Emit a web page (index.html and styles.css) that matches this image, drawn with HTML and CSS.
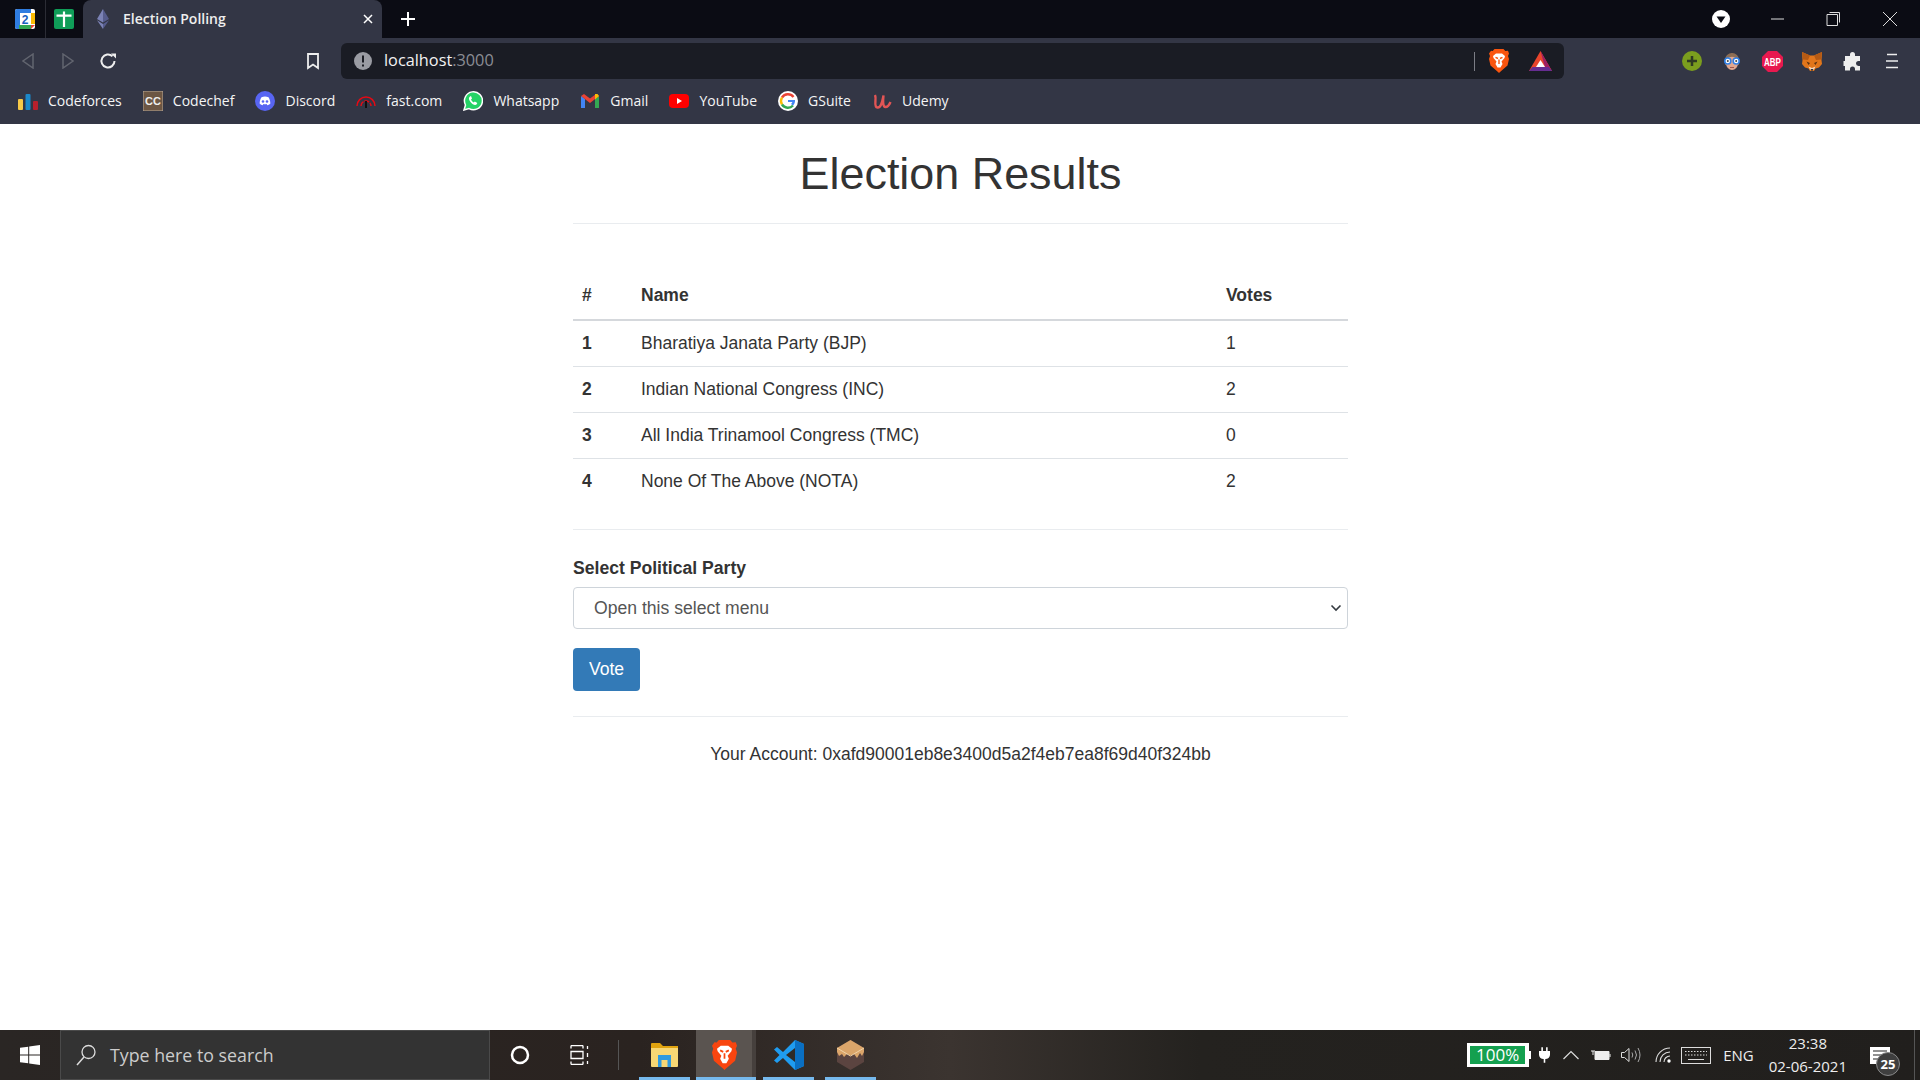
FILE: index.html
```html
<!DOCTYPE html>
<html lang="en">
<head>
    <meta charset="UTF-8">
    <title>Election Polling</title>
    <link rel="stylesheet" href="styles.css">
</head>
<body>
    <!-- tab strip -->
    <div class="tabstrip">
        <span class="pinned">
            <svg width="20" height="20" viewBox="0 0 20 20"><rect width="20" height="20" rx="2" fill="#fff"/><path d="M0 2a2 2 0 0 1 2-2h3v20H2a2 2 0 0 1-2-2z" fill="#2f7de1"/><path d="M2 0h14v4H2z" fill="#2f7de1"/><path d="M16 4h4v11h-4z" fill="#fbbc04"/><path d="M4 16h12v4H4z" fill="#34a853"/><path d="M16 16h4l-4 4z" fill="#ea4335"/><text x="10" y="14.500" class="cal-num">2</text></svg>
        </span>
        <span class="pin-sep"></span>
        <span class="pinned">
            <svg width="20" height="20" viewBox="0 0 20 20"><rect width="20" height="20" rx="2" fill="#0f9d58"/><path d="M2.500 5.500h15v2.200h-6.400V18H8.900V7.700H2.500zM8.900 2.500h2.200v3H8.900z" fill="#fff"/></svg>
        </span>
        <div class="tab">
            <svg class="tab-fav" width="12" height="20" viewBox="0 0 12 20"><path d="M6 0 0 10l6 3.500z" fill="#7b82b5"/><path d="M6 0l6 10-6 3.500z" fill="#565c8c"/><path d="M0 11.300 6 20v-5z" fill="#7b82b5"/><path d="M12 11.300 6 20v-5z" fill="#565c8c"/></svg>
            <span class="tab-title">Election Polling</span>
            <svg class="tab-close" width="10" height="10" viewBox="0 0 10 10"><path d="M1 1l8 8M9 1 1 9" stroke="#fff" stroke-width="1.500"/></svg>
        </div>
        <svg class="new-tab" width="14" height="14" viewBox="0 0 14 14"><path d="M7 0v14M0 7h14" stroke="#fff" stroke-width="2"/></svg>
        <div class="win-controls">
            <svg class="win-drop" width="18" height="18" viewBox="0 0 18 18"><circle cx="9" cy="9" r="9" fill="#fff"/><path d="M4.500 6.500h9L9 13z" fill="#0b0c14"/></svg>
            <svg class="win-btn" width="46" height="14" viewBox="0 0 46 14"><path d="M17 7h13" stroke="#ddd"/></svg>
            <svg class="win-btn" width="46" height="14" viewBox="0 0 46 14"><path d="M19.500.5h10.000v10M17 2.500h10.500v11H17z" fill="none" stroke="#ddd"/></svg>
            <svg class="win-btn" width="46" height="14" viewBox="0 0 46 14"><path d="M17 0l14 14M31 0 17 14" stroke="#ddd"/></svg>
        </div>
    </div>

    <!-- toolbar -->
    <div class="toolbar">
        <span class="tool-btn"><svg width="12" height="16" viewBox="0 0 12 16"><path d="M11 1 1 8l10 7z" fill="none" stroke="#62656f" stroke-width="1.500"/></svg></span>
        <span class="tool-btn"><svg width="12" height="16" viewBox="0 0 12 16"><path d="M1 1l10 7-10 7z" fill="none" stroke="#62656f" stroke-width="1.500"/></svg></span>
        <span class="tool-btn"><svg width="18" height="18" viewBox="0 0 18 18"><path d="M15.500 9a6.500 6.500 0 1 1-2-4.700" fill="none" stroke="#eee" stroke-width="2"/><path d="M12 1.500h5v5z" fill="#eee"/></svg></span>
        <span class="tool-btn bookmark-btn"><svg width="14" height="17" viewBox="0 0 14 17"><path d="M2 1h10v14l-5-3.500L2 15z" fill="none" stroke="#eee" stroke-width="1.800"/></svg></span>
        <div class="address">
            <svg class="addr-alert" width="18" height="18" viewBox="0 0 18 18"><circle cx="9" cy="9" r="9" fill="#9a9ca3"/><path d="M8 3.500h2V10.500H8zM8 12.500h2v2H8z" fill="#1b1d24"/></svg>
            <span class="addr-text">localhost<span class="addr-port">:3000</span></span>
            <span class="addr-sep"></span>
            <svg class="addr-brave" width="20" height="24" viewBox="0 0 20 24"><path d="M5.500 0h9l1.800 2 2.700-.3L20 4.500 19 7l1 3-1.500 6.500L11 23l-1 1-1-1-7.500-6.500L0 10l1-3-1-2.500 2-2.800L3.700 2z" fill="#f9550f"/><path d="M4 7l3-2.500h6L16 7l-.5 2-3 3.500 1 2.500-2 3.500H8.500l-2-3.500 1-2.500-3-3.500z" fill="#fff"/><path d="M6.500 8.300l2.500 1.200M13.500 8.300 11 9.500M10 10.500V15" stroke="#f9550f" stroke-width="1.400"/></svg>
            <svg class="addr-bat" width="23" height="20" viewBox="0 0 23 20"><path d="M11.500 0 0 20h23z" fill="#e8452c"/><path d="M11.500 0 23 20H17z" fill="#9e1f63"/><path d="M0 20l3.500-4h16l3.500 4z" fill="#662d91"/><path d="M11.500 9 7 16h9z" fill="#fff"/></svg>
        </div>
        <div class="extensions">
            <span class="tool-btn"><svg width="20" height="20" viewBox="0 0 20 20"><circle cx="10" cy="10" r="10" fill="#7b9e1e"/><path d="M10 5v10M5 10h10" stroke="#2e3a22" stroke-width="2.500"/></svg></span>
            <span class="tool-btn"><svg width="18" height="20" viewBox="0 0 18 20"><path d="M2 9a7 7 0 0 1 14 0v5H2z" fill="#8d6e55"/><ellipse cx="9" cy="12" rx="6" ry="7" fill="#e0a890"/><path d="M3.500 8c3-3 8-3 11 0V5l-5.500-3-5.500 3z" fill="#8d6e55"/><circle cx="4.800" cy="10" r="3" fill="#fff" stroke="#2f80e8" stroke-width="1.600"/><circle cx="13.200" cy="10" r="3" fill="#fff" stroke="#2f80e8" stroke-width="1.600"/><circle cx="4.800" cy="10" r="1" fill="#444"/><circle cx="13.200" cy="10" r="1" fill="#444"/><path d="M7 16.500h4" stroke="#a0584c"/></svg></span>
            <span class="tool-btn"><svg width="21" height="21" viewBox="0 0 21 21"><path d="M6 0h9l6 6v9l-6 6H6l-6-6V6z" fill="#e8194f"/><text x="10.500" y="11" transform="scale(1 1.350)" class="abp-text">ABP</text></svg></span>
            <span class="tool-btn"><svg width="20" height="19" viewBox="0 0 20 19"><path d="M0 0l8 3.500h4L20 0l-.5 8 .5 4-3 3.500-3.500 1L12 19H8l-1.500-2.500L3 15.500 0 12l.5-4z" fill="#e2761b"/><path d="M0 0l8 3.500L6 8 1 7.500zM20 0l-8 3.500L14 8l5-.5z" fill="#b55a14"/><path d="M4.500 9.500 8 11l-1.500 2zM15.500 9.500 12 11l1.500 2z" fill="#5c3212"/><path d="M6.500 14.500 10 16l3.500-1.500-1.500 3H8z" fill="#f3d6bc"/><path d="M9 17h2v1.500H9z" fill="#233447"/></svg></span>
            <span class="tool-btn"><svg width="19" height="19" viewBox="0 0 19 19"><path d="M7 2.500a2.500 2.500 0 0 1 5 0V4h5v5h-1.500a2.500 2.500 0 0 0 0 5H17v4.500H12V17a2.500 2.500 0 0 0-5 0v1.500H2V14H.5V9H2V4h5z" fill="#eee"/></svg></span>
            <span class="tool-btn"><svg width="14" height="16" viewBox="0 0 14 16"><path d="M2 1.500h10M1 8h12M1 14.500h12" stroke="#eee" stroke-width="1.500"/></svg></span>
        </div>
    </div>

    <!-- bookmarks -->
    <div class="bookmarks">
        <a class="bm"><svg width="20" height="20" viewBox="0 0 20 20"><rect x="0" y="8" width="5" height="11" rx="1" fill="#f7c948"/><rect x="7.500" y="3" width="5" height="16" rx="1" fill="#1b88c9"/><rect x="15" y="10" width="5" height="9" rx="1" fill="#b8202c"/></svg>Codeforces</a>
        <a class="bm"><svg width="20" height="20" viewBox="0 0 20 20"><rect width="20" height="20" fill="#6c5643" stroke="#b7a796"/><text x="10" y="14" class="cc-text">CC</text></svg>Codechef</a>
        <a class="bm"><svg width="20" height="20" viewBox="0 0 20 20"><circle cx="10" cy="10" r="10" fill="#5865f2"/><path d="M6.500 6.300c2.300-1 4.700-1 7 0 1.300 2 1.900 4.200 1.800 6.500-1 .8-2 1.200-3 1.400l-.7-1.100c-1.100.3-2.100.3-3.200 0l-.7 1.100c-1-.2-2-.6-3-1.400-.1-2.300.5-4.500 1.800-6.500z" fill="#fff"/><circle cx="8" cy="10.500" r="1.300" fill="#5865f2"/><circle cx="12" cy="10.500" r="1.300" fill="#5865f2"/></svg>Discord</a>
        <a class="bm"><svg width="20" height="20" viewBox="0 0 20 20"><path d="M1 15a9 9 0 0 1 18 0" fill="none" stroke="#e50914" stroke-width="1.500"/><path d="M5 15a5 5 0 0 1 10 0" fill="none" stroke="#e50914" stroke-width="1.500" stroke-dasharray="5 1"/><path d="M9 10h2v7H9z" fill="#111"/></svg>fast.com</a>
        <a class="bm"><svg width="20" height="20" viewBox="0 0 20 20"><path d="M1 19l1.500-5A9 9 0 1 1 6 17.600z" fill="#25d366" stroke="#fff" stroke-width="1.500"/><path d="M7 5.500c-1.500 1-1.500 3 .5 5.500s4.500 3.500 6 2.500l.8-1.500-2.500-1.500-1 1c-1-.3-2.500-2-2.800-3l1-1-1-2.500z" fill="#fff"/></svg>Whatsapp</a>
        <a class="bm"><svg width="20" height="20" viewBox="0 0 20 20"><path d="M1 5v12h4V8z" fill="#4285f4"/><path d="M15 8v9h4V5z" fill="#34a853"/><path d="M1 5l9 7 9-7-3-2-6 4.500L4 3z" fill="#ea4335"/><path d="M15 3h2.500L19 5l-4 3.500z" fill="#fbbc04"/></svg>Gmail</a>
        <a class="bm"><svg width="20" height="20" viewBox="0 0 20 20"><rect y="3" width="20" height="14" rx="4" fill="#f00"/><path d="M8 7l5 3-5 3z" fill="#fff"/></svg>YouTube</a>
        <a class="bm"><svg width="20" height="20" viewBox="0 0 20 20"><circle cx="10" cy="10" r="10" fill="#fff"/><path d="M15.500 6A7 7 0 0 0 4 6.500" fill="none" stroke="#ea4335" stroke-width="2.400"/><path d="M4 6.500a7 7 0 0 0 0 7" fill="none" stroke="#fbbc04" stroke-width="2.400"/><path d="M4 13.500a7 7 0 0 0 11 1" fill="none" stroke="#34a853" stroke-width="2.400"/><path d="M10 9h7c.2 2.500-.7 4.400-2 5.500l-2-1.500c.7-.5 1.200-1.200 1.400-2H10z" fill="#4285f4"/></svg>GSuite</a>
        <a class="bm"><svg width="20" height="20" viewBox="0 0 20 20"><path d="M3 4c2 4-2 12 2.500 12.500C9.500 17 10.500 9 11.500 4.500c-.5 5-1 11.500 2 11.500 2.500 0 4-2.500 5-5" fill="none" stroke="#e25555" stroke-width="2.400"/></svg>Udemy</a>
    </div>

    <!-- page -->
    <div class="page">
        <div class="container">
            <h1 class="title">Election Results</h1>
            <hr class="rule rule-top">
            <table class="results">
                <thead>
                    <tr><th class="col-num">#</th><th class="col-name">Name</th><th class="col-votes">Votes</th></tr>
                </thead>
                <tbody>
                    <tr><th>1</th><td>Bharatiya Janata Party (BJP)</td><td>1</td></tr>
                    <tr><th>2</th><td>Indian National Congress (INC)</td><td>2</td></tr>
                    <tr><th>3</th><td>All India Trinamool Congress (TMC)</td><td>0</td></tr>
                    <tr><th>4</th><td>None Of The Above (NOTA)</td><td>2</td></tr>
                </tbody>
            </table>
            <hr class="rule rule-mid">
            <label class="vote-label">Select Political Party</label>
            <div class="select">
                <span>Open this select menu</span>
                <svg width="12" height="8" viewBox="0 0 12 8"><path d="M1.500 1.500 6 6l4.500-4.500" fill="none" stroke="#343a40" stroke-width="1.600"/></svg>
            </div>
            <button class="vote-btn">Vote</button>
            <hr class="rule rule-bottom">
            <p class="account">Your Account: 0xafd90001eb8e3400d5a2f4eb7ea8f69d40f324bb</p>
        </div>
    </div>

    <!-- windows taskbar -->
    <div class="taskbar">
        <span class="start"><svg width="20" height="20" viewBox="0 0 20 20"><path d="M0 2.800 8.200 1.700v7.800H0zM9.200 1.500 20 0v9.500H9.200zM0 10.500h8.200v7.800L0 17.200zM9.200 10.500H20V20L9.200 18.500z" fill="#fff"/></svg></span>
        <div class="search">
            <svg width="20" height="22" viewBox="0 0 20 22"><circle cx="12.500" cy="8" r="6.500" fill="none" stroke="#ddd" stroke-width="1.300"/><path d="M8 13 1 21" stroke="#ddd" stroke-width="1.500"/></svg>
            <span>Type here to search</span>
        </div>
        <span class="task-tool"><svg width="20" height="20" viewBox="0 0 20 20"><circle cx="10" cy="10" r="8" fill="none" stroke="#fff" stroke-width="2.500"/></svg></span>
        <span class="task-tool"><svg width="20" height="20" viewBox="0 0 20 20"><path d="M1 .5h12M1 19.500h12M1 6.500h12v7H1zM1 .5v3M13 .5v3M1 16.500v3M13 16.500v3M17.500 1v3M17.500 8v4M17.500 16v3" fill="none" stroke="#fff" stroke-width="1.300"/></svg></span>
        <span class="task-sep"></span>
        <span class="task-app task-folder running"><svg width="27" height="24" viewBox="0 0 27 24"><path d="M0 1a1 1 0 0 1 1-1h8l3 3h15v4H0z" fill="#e0a30f"/><path d="M0 5h27v18a1 1 0 0 1-1 1H1a1 1 0 0 1-1-1z" fill="#f7d774"/><path d="M7 12h13v12h-3.500v-7h-6v7H7z" fill="#2e9ae0"/></svg></span>
        <span class="task-app running active"><svg width="25" height="30" viewBox="0 0 20 24"><path d="M5.500 0h9l1.800 2 2.700-.3L20 4.500 19 7l1 3-1.500 6.500L11 23l-1 1-1-1-7.500-6.500L0 10l1-3-1-2.500 2-2.800L3.700 2z" fill="#f9450f"/><path d="M4 7l3-2.500h6L16 7l-.5 2-3 3.500 1 2.500-2 3.500H8.500l-2-3.500 1-2.500-3-3.500z" fill="#fff"/><path d="M6.500 8.300l2.500 1.200M13.500 8.300 11 9.500M10 10.500V15" stroke="#f9450f" stroke-width="1.400"/></svg></span>
        <span class="task-app running"><svg width="30" height="30" viewBox="0 0 30 30"><path d="M21 0 30 4v22l-9 4L9 18l-6 5-3-2.500L5.500 15 0 9.500 3 7l6 5z" fill="#1f9cf0"/><path d="M21 8 12 15l9 7z" fill="#2f2a26"/><path d="M21 0v30l9-4V4z" fill="#0a6fc2"/></svg></span>
        <span class="task-app running"><svg width="27" height="30" viewBox="0 0 27 30"><path d="M13.500 0 27 8v14l-13.500 8L0 22V8z" fill="#5b4440"/><path d="M13.500 0 27 8v4l-2 4-2-3-3 5-3-4-3.500 1.500L10 14l-3 3-2-3-3 2-2-4V8z" fill="#dba56a"/><path d="M0 8l13.500 8L27 8" fill="none" stroke="#f0d3a8" stroke-width="1"/></svg></span>
        <div class="tray">
            <span class="batt-meter"><span class="batt-fill">100%</span></span>
            <svg class="tray-plug" width="11" height="20" viewBox="0 0 14 20"><path d="M3 0h2v5h4V0h2v5h3v5a6 6 0 0 1-6 5v5H6v-5a6 6 0 0 1-6-5V5h3z" fill="#fff"/></svg>
            <svg class="tray-chev" width="16" height="10" viewBox="0 0 16 10"><path d="M.5 9 8 1.500 15.500 9" fill="none" stroke="#ddd" stroke-width="1.200"/></svg>
            <svg class="tray-batt" width="20" height="14" viewBox="0 0 20 14"><path d="M4 3.500h14v8H4z" fill="#eee" stroke="#eee"/><path d="M19 6v3" stroke="#eee"/><path d="M0 3h4M2 3v4" stroke="#eee"/></svg>
            <svg class="tray-vol" width="20" height="16" viewBox="0 0 20 16"><path d="M.5 5.500h3L8 1.500v13l-4.500-4h-3z" fill="none" stroke="#ddd"/><path d="M11 5.500q1.500 2.500 0 5M14 3.500q3 4.500 0 9M17 1q4 7 0 14" fill="none" stroke="#aaa"/></svg>
            <svg class="tray-wifi" width="18" height="16" viewBox="0 0 18 16"><path d="M1 15A14 14 0 0 1 15 1M5 15A10 10 0 0 1 15 5M9 15a6 6 0 0 1 6-6" fill="none" stroke="#ddd" stroke-width="1.100"/><circle cx="14" cy="14" r="1.700" fill="#fff"/></svg>
            <svg class="tray-kbd" width="30" height="17" viewBox="0 0 30 17"><rect x=".5" y=".5" width="29" height="16" fill="none" stroke="#ddd"/><path d="M4 4.500h22M4 8h22" stroke="#ddd" stroke-dasharray="1.500 1.500"/><path d="M7 12.500h16" stroke="#ddd"/></svg>
            <span class="tray-lang">ENG</span>
            <span class="tray-clock"><span>23:38</span><span>02-06-2021</span></span>
            <span class="tray-notif">
                <svg width="20" height="17" viewBox="0 0 20 17"><path d="M0 0h20v17H0z" fill="#fff"/><path d="M3 4h14M3 8h14M3 12h9" stroke="#222" stroke-width="1.200"/></svg>
                <span class="notif-count">25</span>
            </span>
        </div>
    </div>
</body>
</html>
```

FILE: styles.css
```css
* {
    box-sizing: border-box;
}
html, body {
    height: 100%;
}
body {
    margin: 0;
    width: 1920px;
    height: 1080px;
    overflow: hidden;
    display: flex;
    flex-direction: column;
    font-family: "Liberation Sans", Arial, sans-serif;
    color: #333;
    background-color: #fff;
}
svg {
    display: block;
    flex-shrink: 0;
}

/* tab strip */
.tabstrip {
    height: 38px;
    background-color: #0b0c14;
    display: flex;
    align-items: center;
    font-family: "Open Sans", sans-serif;
    color: #eee;
}
.pinned {
    width: 39px;
    height: 38px;
    display: flex;
    align-items: center;
    justify-content: center;
}
.pinned:first-child {
    margin-left: 5px;
}
.pin-sep {
    width: 1px;
    height: 38px;
    margin-left: 1px;
    margin-right: -2px;
    background-color: #2b2c35;
}
.tab {
    width: 299px;
    height: 38px;
    background-color: #333645;
    border-radius: 8px 8px 0 0;
    display: flex;
    align-items: center;
    padding-left: 14px;
}
.tab-title {
    margin-left: 14px;
    margin-bottom: 2px;
    font-size: 14px;
    font-weight: 600;
    flex: 1;
}
.tab-close {
    margin-right: 9px;
}
.new-tab {
    margin-left: 19px;
}
.win-controls {
    margin-left: auto;
    display: flex;
    align-items: center;
    padding-right: 8px;
}
.win-drop {
    margin-right: 14px;
}
.win-btn {
    width: 46px;
    margin-left: 10px;
}

/* toolbar */
.toolbar {
    height: 42px;
    background-color: #333645;
    display: flex;
    align-items: center;
    padding-left: 8px;
    padding-top: 4px;
}
.tool-btn {
    width: 40px;
    height: 36px;
    display: flex;
    align-items: center;
    justify-content: center;
}
.bookmark-btn {
    margin-left: 165px;
}
.address {
    width: 1223px;
    height: 36px;
    margin-left: 8px;
    background-color: #1a1c24;
    border-radius: 6px;
    display: flex;
    align-items: center;
    padding-left: 13px;
    font-family: "Open Sans", sans-serif;
}
.addr-text {
    margin-left: 12px;
    margin-bottom: 2px;
    font-size: 16.300px;
    color: #f2f2f2;
}
.addr-port {
    color: #8b8d94;
}
.addr-sep {
    width: 1px;
    height: 19px;
    margin-left: auto;
    background-color: #7b7d85;
}
.addr-brave {
    margin-left: 14px;
}
.addr-bat {
    margin-left: 20px;
    margin-right: 12px;
}
.extensions {
    display: flex;
    margin-left: 108px;
}

/* bookmarks */
.bookmarks {
    height: 44px;
    background-color: #333645;
    display: flex;
    align-items: center;
    padding-left: 18px;
    padding-bottom: 3px;
    gap: 21.100px;
    font-family: "Open Sans", sans-serif;
    font-size: 14px;
    color: #f5f5f5;
}
.bm {
    display: flex;
    align-items: center;
    gap: 10px;
}
.cal-num {
    font: bold 12px "Liberation Sans", sans-serif;
    fill: #1a5fc0;
    text-anchor: middle;
}
.abp-text {
    font: bold 8px "Liberation Sans", sans-serif;
    fill: #fff;
    text-anchor: middle;
}
.cc-text {
    font: bold 11px "Liberation Sans", sans-serif;
    fill: #eee;
    text-anchor: middle;
}

/* page */
.page {
    flex: 1;
    background-color: #fff;
}
.container {
    width: 775px;
    margin: 0 auto;
    position: relative;
    left: 0.5px;
}
.title {
    margin: 0;
    padding-top: 23px;
    height: 99px;
    text-align: center;
    font-size: 44.900px;
    font-weight: 400;
    line-height: 54px;
}
.rule {
    border: 0;
    border-top: 1px solid #e9ecef;
    margin: 0;
}
.rule-top {
    margin-bottom: 48px;
}
.results {
    width: 100%;
    border-collapse: collapse;
}
.results th,
.results td {
    padding: 0 0 0 10px;
    height: 46px;
    text-align: left;
    font-size: 17.500px;
    border-top: 1px solid #dee2e6;
}
.results th:first-child {
    padding-left: 9px;
}
.results thead th {
    height: 48px;
    border-top: 0;
    border-bottom: 2px solid #d5d8dc;
}
.col-num {
    width: 58px;
}
.col-votes {
    width: 132px;
}
.rule-mid {
    margin-top: 25px;
}
.vote-label {
    display: block;
    margin-top: 26px;
    font-size: 17.600px;
    font-weight: 700;
    line-height: 24px;
}
.select {
    height: 42px;
    margin-top: 7px;
    border: 1px solid #ced4da;
    border-radius: 4px;
    padding: 0 5px 0 20px;
    display: flex;
    align-items: center;
    justify-content: space-between;
    font-size: 17.600px;
    color: #555;
}
.vote-btn {
    display: block;
    width: 67px;
    height: 43px;
    margin-top: 19px;
    padding: 0;
    border: 0;
    border-radius: 4px;
    background-color: #337ab7;
    color: #fff;
    font-family: "Liberation Sans", sans-serif;
    font-size: 17.600px;
}
.rule-bottom {
    margin-top: 25px;
}
.account {
    margin: 24px 0 0;
    text-align: center;
    font-size: 17.500px;
    line-height: 26px;
}

/* taskbar */
.taskbar {
    height: 50px;
    background: linear-gradient(90deg, #2a2624 0, #2a2320 640px, #3b3430 950px, #24221f 1200px, #211f1d 1920px);
    display: flex;
    align-items: center;
    font-family: "Open Sans", sans-serif;
    color: #eee;
}
.start {
    width: 60px;
    height: 50px;
    display: flex;
    align-items: center;
    justify-content: center;
}
.search {
    width: 430px;
    height: 50px;
    background-color: #333;
    border: 1px solid #4a4a4a;
    display: flex;
    align-items: center;
    padding-left: 15px;
    gap: 14px;
    font-size: 17.800px;
    color: #ccc;
}
.task-tool {
    width: 60px;
    height: 50px;
    display: flex;
    align-items: center;
    justify-content: center;
}
.task-sep {
    width: 1px;
    height: 30px;
    margin-left: 8px;
    margin-right: 20px;
    background-color: #555;
}
.task-app {
    width: 51px;
    height: 50px;
    margin-right: 11px;
    display: flex;
    align-items: center;
    justify-content: center;
}
.task-folder {
    margin-right: 6px;
}
.task-app.running {
    box-shadow: inset 0 -3px 0 #76b9ed;
}
.task-app.active {
    width: 60px;
    margin-right: 7px;
    padding-right: 4px;
    background: linear-gradient(90deg, #5a5450 56px, #46403d 56px);
}
.tray {
    margin-left: auto;
    display: flex;
    align-items: center;
    height: 50px;
    font-size: 15px;
    border-right: 1px solid #555;
    margin-right: 5px;
}
.batt-meter {
    position: relative;
    width: 62px;
    height: 24px;
    border: 3px solid #fff;
    background-color: #fff;
    margin-right: 10px;
}
.batt-meter::after {
    content: "";
    position: absolute;
    right: -5px;
    top: 5px;
    width: 2px;
    height: 8px;
    background-color: #fff;
}
.batt-fill {
    display: block;
    width: 55px;
    height: 18px;
    background-color: #14a04f;
    color: #fff;
    font-size: 17px;
    line-height: 18px;
    text-align: center;
}
.tray-chev {
    margin-left: 13px;
}
.tray-batt {
    margin-left: 12px;
}
.tray-vol {
    margin-left: 10px;
}
.tray-wifi {
    margin-left: 14px;
}
.tray-kbd {
    margin-left: 8px;
}
.tray-lang {
    margin-left: 12px;
}
.tray-clock {
    margin-left: 15px;
    display: flex;
    flex-direction: column;
    align-items: center;
    font-size: 15px;
    line-height: 23px;
}
.tray-notif {
    position: relative;
    width: 34px;
    height: 50px;
    margin-left: 16px;
    margin-right: 17px;
    display: flex;
    align-items: center;
    justify-content: center;
}
.notif-count {
    position: absolute;
    right: -3px;
    bottom: 4px;
    width: 24px;
    height: 24px;
    border-radius: 50%;
    background-color: #3f3f3f;
    border: 1px solid #888;
    font-size: 13px;
    font-weight: 700;
    line-height: 22px;
    text-align: center;
    color: #fff;
}
```
